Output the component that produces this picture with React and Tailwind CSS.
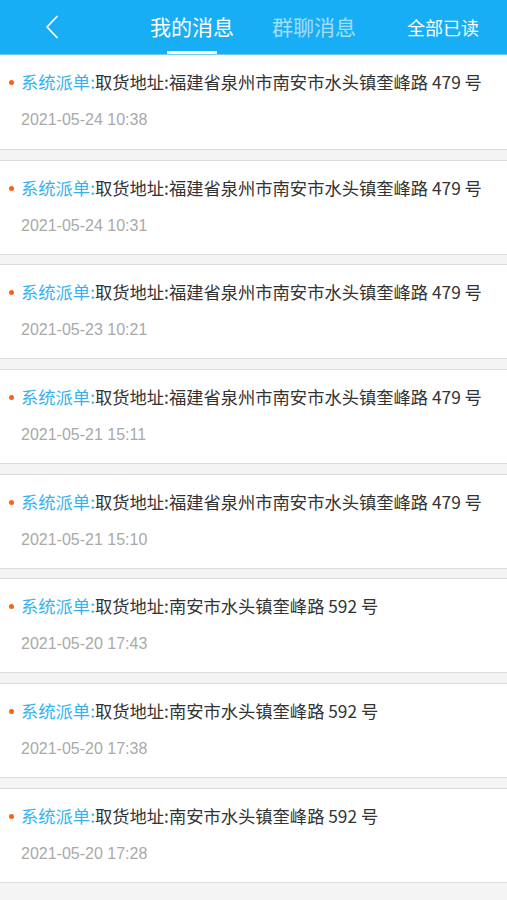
import React from 'react';

const messages = [
    { addr: '福建省泉州市南安市水头镇奎峰路 479 号', time: '2021-05-24 10:38' },
    { addr: '福建省泉州市南安市水头镇奎峰路 479 号', time: '2021-05-24 10:31' },
    { addr: '福建省泉州市南安市水头镇奎峰路 479 号', time: '2021-05-23 10:21' },
    { addr: '福建省泉州市南安市水头镇奎峰路 479 号', time: '2021-05-21 15:11' },
    { addr: '福建省泉州市南安市水头镇奎峰路 479 号', time: '2021-05-21 15:10' },
    { addr: '南安市水头镇奎峰路 592 号', time: '2021-05-20 17:43' },
    { addr: '南安市水头镇奎峰路 592 号', time: '2021-05-20 17:38' },
    { addr: '南安市水头镇奎峰路 592 号', time: '2021-05-20 17:28' },
];

const cjk = { fontFamily: '"Noto Sans CJK SC", "Noto Sans", sans-serif' };

const App = () => {
    return (
        <div className="min-h-[900px] bg-[#f4f4f4] overflow-hidden" style={cjk}>
            {/* header */}
            <div className="h-[55px] bg-[#17aef5] flex items-center text-white border-b border-[#6cc9f5]">
                <div className="w-[104px] flex justify-center">
                    <svg width="14" height="24" viewBox="0 0 14 24" fill="none">
                        <path d="M12 1.5 L2 12 L12 22.5" stroke="white" strokeWidth="1.8" strokeLinecap="round" strokeLinejoin="round" />
                    </svg>
                </div>
                <div className="w-[27px]" />
                <div className="relative w-[122px] h-full flex items-center justify-center text-[21px]">
                    我的消息
                    <span className="absolute bottom-0 left-1/2 -translate-x-1/2 w-[50px] h-[3px] bg-white" />
                </div>
                <div className="w-[122px] h-full flex items-center justify-center text-[21px] text-white/60">群聊消息</div>
                <div className="flex-1 flex justify-center text-[18px] pl-[4px]">全部已读</div>
            </div>

            {/* list */}
            <div className="flex flex-col gap-[9.7px]">
                {messages.map((m, i) => (
                    <div
                        key={i}
                        className={`bg-white border-b border-[#dcdcdc] h-[95px] flex flex-col pl-[21px] ${i === 0 ? '' : 'border-t'}`}
                    >
                        <div className="relative mt-[14px] text-[17.3px] leading-[26px] text-[#333] whitespace-nowrap">
                            <span className="absolute left-[-12px] top-[11px] w-[5px] h-[5px] rounded-full bg-[#f5621b]" />
                            <span className="text-[#34b1ee]">系统派单:</span>
                            取货地址:{m.addr}
                        </div>
                        <div
                            className="mt-[15px] text-[16px] leading-[20px] text-[#a9a9a9]"
                            style={{ fontFamily: '"Liberation Sans", Arial, sans-serif' }}
                        >
                            {m.time}
                        </div>
                    </div>
                ))}
            </div>
        </div>
    );
};

export default App;
